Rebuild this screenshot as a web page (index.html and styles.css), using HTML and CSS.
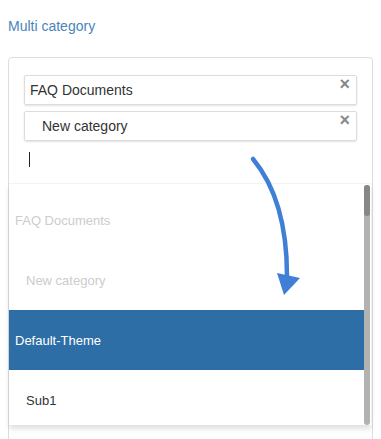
FILE: index.html
```html
<!DOCTYPE html>
<html lang="en">
<head>
  <meta charset="UTF-8" />
  <meta name="viewport" content="width=device-width, initial-scale=1.0" />
  <title>Multi category</title>
  <link rel="stylesheet" href="styles.css">
</head>
<body>
  <label class="field-label">Multi category</label>
  <div class="multi">
    <ul class="chosen">
      <li class="tag"><span>FAQ Documents</span><b class="remove">&times;</b></li>
      <li class="tag sub"><span>New category</span><b class="remove">&times;</b></li>
    </ul>
    <div class="search"><i class="caret"></i></div>
    <div class="dropdown">
      <ul class="options">
        <li class="opt disabled">FAQ Documents</li>
        <li class="opt disabled sub">New category</li>
        <li class="opt active">Default-Theme</li>
        <li class="opt sub">Sub1</li>
      </ul>
      <div class="scrollbar"><div class="thumb"></div></div>
    </div>
  </div>

  <svg class="hint-arrow" width="381" height="439" viewBox="0 0 381 439">
    <path d="M253 159 Q287 200 287 276" fill="none" stroke="#3f7fd6" stroke-width="4.5" stroke-linecap="round"/>
    <polygon points="277,273 300,278 284,295" fill="#3f7fd6"/>
  </svg>
</body>
</html>
```
FILE: styles.css
```css
*{
  margin: 0;
  padding: 0;
  box-sizing: border-box;
}
body{
  padding: 16px 8px 0;
  font-family: "Liberation Sans", Arial, sans-serif;
  color: #333;
  background: #fff;
  overflow: hidden;
}
.field-label{
  display: block;
  font-size: 14px;
  line-height: 21px;
  color: #4a84b8;
}
.multi{
  margin-top: 20px;
  border: 1px solid #ddd;
  border-radius: 4px;
  padding: 17px 15px 0;
  height: 420px;
}
.chosen{
  list-style: none;
  display: flex;
  flex-direction: column;
  gap: 6px;
}
.tag{
  display: flex;
  justify-content: space-between;
  height: 30px;
  border: 1px solid #dcdcdc;
  border-radius: 2px;
  box-shadow: 0 1px 2px rgba(0,0,0,.12);
  padding: 0 6px 0 5px;
  font-size: 14px;
  line-height: 29px;
}
.tag.sub span{
  padding-left: 12px;
}
.tag .remove{
  font-size: 18px;
  line-height: 16px;
  color: #888;
  font-weight: bold;
}
.search{
  height: 42px;
  padding: 11px 0 0 5px;
}
.caret{
  display: block;
  width: 1px;
  height: 15px;
  background: #222;
}
.dropdown{
  display: flex;
  margin: 0 -14px 0 -15px;
  height: 242px;
  border-top: 1px solid #f3f3f3;
  background: #fff;
  box-shadow: 0 4px 5px rgba(0,0,0,.12);
  overflow: hidden;
}
.options{
  flex: 1;
  list-style: none;
  padding-top: 6px;
}
.opt{
  height: 60px;
  line-height: 61px;
  padding-left: 6px;
  font-size: 13px;
  color: #333;
}
.opt.sub{
  padding-left: 17px;
}
.opt.disabled{
  color: #ccc;
}
.opt.active{
  background: #2d6ea6;
  color: #fff;
}
.scrollbar{
  width: 6px;
  margin: 1px 1px 0 0;
  background: #b2b2b2;
  border-radius: 3px;
}
.thumb{
  height: 31px;
  background: #878787;
  border-radius: 3px;
}
.hint-arrow{
  position: absolute;
  top: 0;
  left: 0;
  pointer-events: none;
}
```
